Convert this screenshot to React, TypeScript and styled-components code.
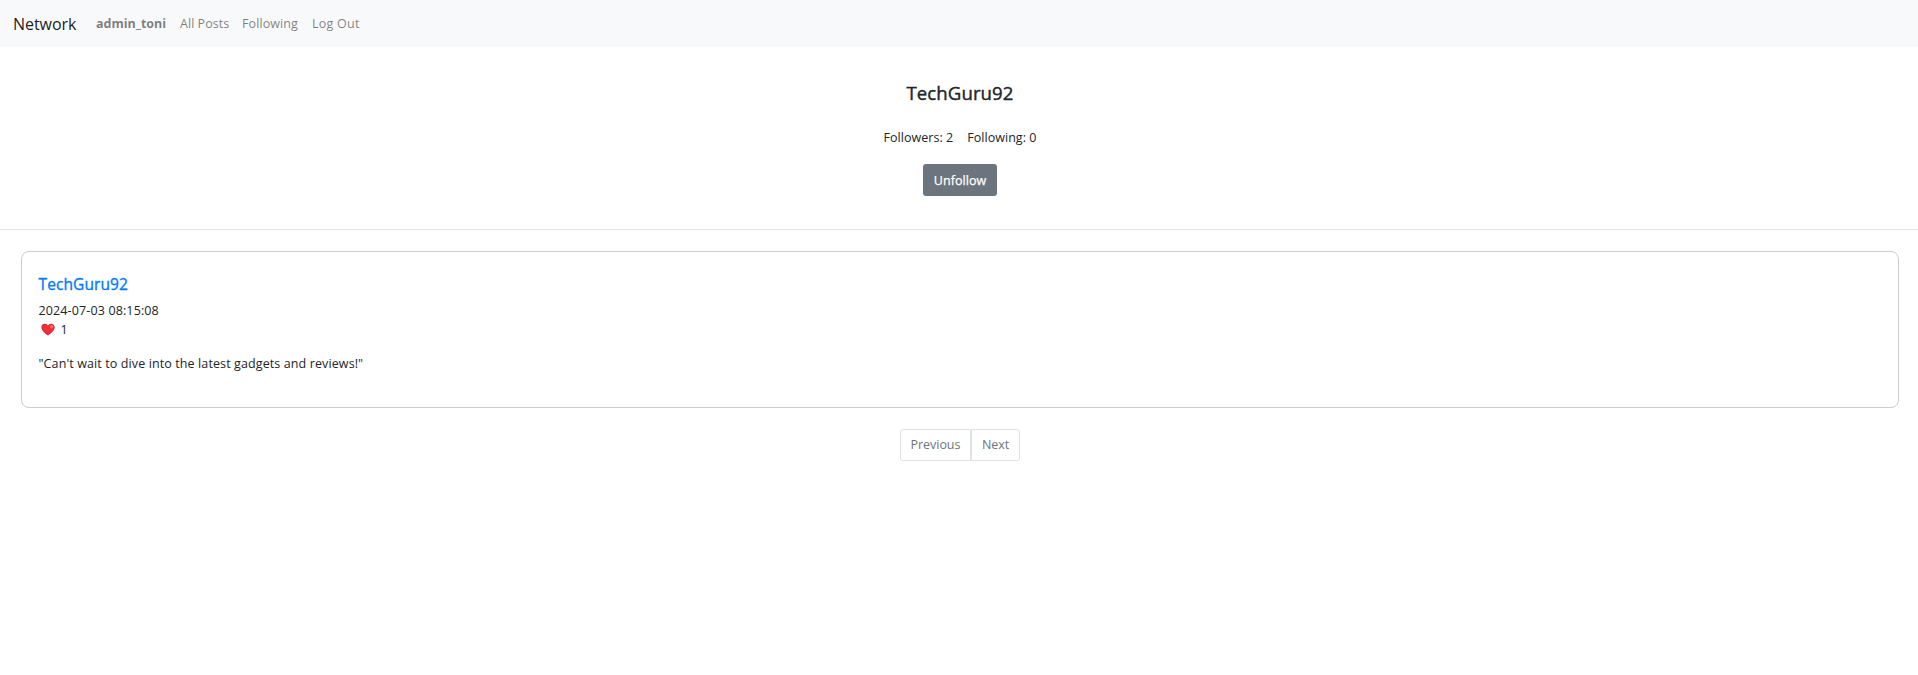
import React from "react";
import styled, { createGlobalStyle } from "styled-components";

const GlobalStyle = createGlobalStyle`
  *, *::before, *::after { box-sizing: border-box; }
  body {
    margin: 0;
    background: #fff;
    color: #212529;
    font-family: "Segoe UI", "Open Sans", "Noto Sans", sans-serif;
    font-size: 12.5px;
    line-height: 19px;
  }
  h2, h3, p, ul { margin: 0; padding: 0; }
`;

const Navbar = styled.nav`
  display: flex;
  align-items: center;
  height: 47px;
  padding: 0 13px;
  background: #f8f9fa;
`;

const Brand = styled.a`
  width: 77px;
  font-size: 16px;
  line-height: 24px;
  letter-spacing: -0.05px;
  color: rgba(0, 0, 0, 0.9);
  white-space: nowrap;
`;

const NavLinks = styled.ul`
  display: flex;
  list-style: none;
`;

const NavItem = styled.li<{ $width: number; $strong?: boolean; $spacing?: number }>`
  width: ${(p) => p.$width}px;
  padding-left: 6px;
  color: rgba(0, 0, 0, 0.5);
  font-weight: ${(p) => (p.$strong ? 700 : 400)};
  letter-spacing: ${(p) => p.$spacing ?? 0}px;
  white-space: nowrap;
`;

const Profile = styled.header`
  display: flex;
  flex-direction: column;
  align-items: center;
  height: 183px;
  padding: 34px 0 0 2px;
  border-bottom: 1px solid #e5e5e5;
`;

const ProfileName = styled.h2`
  font-size: 18.6px;
  font-weight: 500;
  line-height: 24px;
  letter-spacing: 0.1px;
  -webkit-text-stroke: 0.4px currentColor;
`;

const Stats = styled.div`
  display: flex;
  gap: 14px;
  margin: 23px 0 17px;
  letter-spacing: 0.04px;
`;

const FollowButton = styled.button`
  width: 74px;
  height: 32px;
  padding: 0;
  border: 0;
  border-radius: 3px;
  background: #6c757d;
  color: #fff;
  font: inherit;
  font-weight: 500;
  letter-spacing: 0.05px;
  -webkit-text-stroke: 0.25px currentColor;
`;

const Post = styled.article`
  height: 157px;
  margin: 21px 19px 0 21px;
  padding: 22px 16.5px;
  border: 1px solid #ccc;
  border-radius: 8px;
`;

const Author = styled.h3`
  margin-bottom: 7px;
  font-size: 15.5px;
  font-weight: 500;
  line-height: 20px;
  letter-spacing: 0.1px;
  color: #007bff;
  -webkit-text-stroke: 0.35px currentColor;
`;

const PostDate = styled.p`
  letter-spacing: 0.13px;
`;

const Likes = styled.div`
  display: flex;
  align-items: center;
  gap: 6px;
  padding-left: 2px;
`;

const Message = styled.p`
  margin-top: 15px;
  letter-spacing: 0.11px;
`;

const Pagination = styled.div`
  display: flex;
  justify-content: center;
  margin-top: 21px;
  padding-left: 2px;
`;

const PageLink = styled.a<{ $width: number; $side: "left" | "right" }>`
  display: flex;
  align-items: center;
  justify-content: center;
  width: ${(p) => p.$width}px;
  height: 32px;
  padding-bottom: 2px;
  border: 1px solid #dee2e6;
  border-radius: ${(p) => (p.$side === "left" ? "3px 0 0 3px" : "0 3px 3px 0")};
  color: #6c757d;
  letter-spacing: -0.05px;
`;

const Heart = () => (
  <svg width="14" height="13" viewBox="0 0 14 13" aria-hidden="true">
    <path d="M7 12.6C4.8 10.6.4 7.9.4 4.2.4 2 1.9.7 3.7.7 5.2.7 6.4 1.5 7 2.7 7.6 1.5 8.8.7 10.3.7c1.8 0 3.3 1.3 3.3 3.5 0 3.7-4.4 6.4-6.6 8.4z" fill="#c91f45" />
    <path d="M7.1 11.4C5.2 9.6 1.5 7.4 1.4 4.2 1.4 2.7 2.4 1.6 3.8 1.6 5.4 1.6 6.5 2.8 7 4 7.5 2.4 8.7 1.2 10.3 1.2c1.7 0 2.9 1.3 2.9 3C13.2 7.4 9.3 9.6 7.1 11.4z" fill="#fb2c32" />
    <ellipse cx="10.6" cy="3.7" rx="1.3" ry="1.7" transform="rotate(30 10.6 3.7)" fill="#ff7568" />
  </svg>
);

export default function App() {
  return (
    <>
      <GlobalStyle />
      <Navbar>
        <Brand>Network</Brand>
        <NavLinks>
          <NavItem $width={84} $strong>admin_toni</NavItem>
          <NavItem $width={62} $spacing={0.04}>All Posts</NavItem>
          <NavItem $width={70} $spacing={0.1}>Following</NavItem>
          <NavItem $width={60} $spacing={0.25}>Log Out</NavItem>
        </NavLinks>
      </Navbar>
      <Profile>
        <ProfileName>TechGuru92</ProfileName>
        <Stats>
          <span>Followers: 2</span>
          <span>Following: 0</span>
        </Stats>
        <FollowButton>Unfollow</FollowButton>
      </Profile>
      <Post>
        <Author>TechGuru92</Author>
        <PostDate>2024-07-03 08:15:08</PostDate>
        <Likes>
          <Heart />
          <span>1</span>
        </Likes>
        <Message>"Can't wait to dive into the latest gadgets and reviews!"</Message>
      </Post>
      <Pagination>
        <PageLink $width={71} $side="left">Previous</PageLink>
        <PageLink $width={49} $side="right">Next</PageLink>
      </Pagination>
    </>
  );
}
